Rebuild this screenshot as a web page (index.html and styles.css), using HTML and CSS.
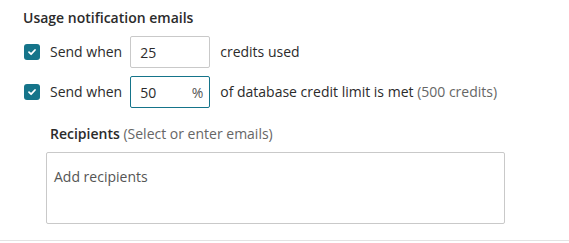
FILE: index.html
```html
<!doctype html>
<html lang="en">
<head>
<meta charset="utf-8">
<title>Usage notification emails</title>
<link rel="stylesheet" href="styles.css">
</head>
<body>
	<div class="un-painel">
		<h3 class="un-titulo">Usage notification emails</h3>
		<div class="un-linha">
			<span class="un-check"><svg width="10" height="10" viewBox="0 0 10 10"><path d="M2 5.2 L4.1 7.2 L8 3" fill="none" stroke="#fff" stroke-width="1.8" stroke-linecap="round" stroke-linejoin="round"/></svg></span>
			<span class="un-texto">Send when</span>
			<div class="un-campo">25</div>
			<span class="un-texto">credits used</span>
		</div>
		<div class="un-linha">
			<span class="un-check"><svg width="10" height="10" viewBox="0 0 10 10"><path d="M2 5.2 L4.1 7.2 L8 3" fill="none" stroke="#fff" stroke-width="1.8" stroke-linecap="round" stroke-linejoin="round"/></svg></span>
			<span class="un-texto">Send when</span>
			<div class="un-campo un-ativo">50<span class="un-sufixo">%</span></div>
			<span class="un-texto">of database credit limit is met <span class="un-cinza">(500 credits)</span></span>
		</div>
		<div class="un-destinatarios">
			<div class="un-rotulo"><b>Recipients</b> <span class="un-cinza">(Select or enter emails)</span></div>
			<div class="un-area">Add recipients</div>
		</div>
	</div>
</body>
</html>
```
FILE: styles.css
```css
*
{
	margin: 0;
	padding: 0;
	box-sizing: border-box;
}
body
{
	font-family: "Open Sans", Arial, sans-serif;
	font-size: 14px;
	color: #2b2b2b;
	background-color: #FFF;
}
.un-painel
{
	padding: 8px 0 16px 23px;
	border-bottom: 1px solid #e3e3e3;
	height: 241px;
}
.un-titulo
{
	font-size: 14px;
	font-weight: 600;
	line-height: 20px;
	margin-bottom: 8px;
}
.un-linha
{
	display: flex;
	align-items: center;
	height: 32px;
	margin-bottom: 8px;
}
.un-check
{
	width: 16px;
	height: 16px;
	margin-left: 1px;
	border-radius: 3px;
	background-color: #15748a;
	display: flex;
	align-items: center;
	justify-content: center;
	margin-right: 10px;
}
.un-texto
{
	line-height: 20px;
}
.un-cinza
{
	color: #666;
}
.un-campo
{
	width: 80px;
	height: 32px;
	border: 1px solid #c9c9c9;
	border-radius: 2px;
	margin: 0 10px 0 8px;
	padding: 0 6px 0 9px;
	display: flex;
	align-items: center;
	justify-content: space-between;
}
.un-ativo
{
	border-color: #15748a;
}
.un-sufixo
{
	color: #555;
}
.un-destinatarios
{
	margin-left: 23px;
	margin-top: 16px;
}
.un-rotulo
{
	line-height: 20px;
	margin-left: 4px;
	margin-bottom: 8px;
}
.un-rotulo b
{
	font-weight: 600;
}
.un-area
{
	width: 459px;
	height: 72px;
	border: 1px solid #c9c9c9;
	border-radius: 2px;
	padding: 14px 7px;
	line-height: 20px;
	color: #555;
}
```
